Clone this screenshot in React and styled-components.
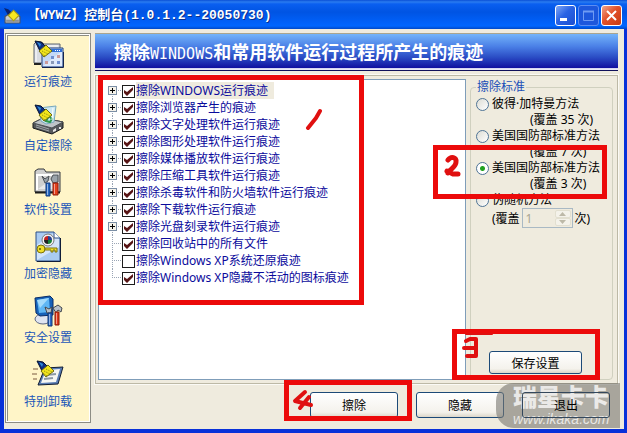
import React, { useState } from 'react';
import styled, { createGlobalStyle, css } from 'styled-components';

const treeItems = [
  { text: '擦除WINDOWS运行痕迹', children: true, checked: true, selected: true },
  { text: '擦除浏览器产生的痕迹', children: true, checked: true },
  { text: '擦除文字处理软件运行痕迹', children: true, checked: true },
  { text: '擦除图形处理软件运行痕迹', children: true, checked: true },
  { text: '擦除媒体播放软件运行痕迹', children: true, checked: true },
  { text: '擦除压缩工具软件运行痕迹', children: true, checked: true },
  { text: '擦除杀毒软件和防火墙软件运行痕迹', children: true, checked: true },
  { text: '擦除下载软件运行痕迹', children: true, checked: true },
  { text: '擦除光盘刻录软件运行痕迹', children: true, checked: true },
  { text: '擦除回收站中的所有文件', checked: true },
  { text: '擦除Windows XP系统还原痕迹', checked: false },
  { text: '擦除Windows XP隐藏不活动的图标痕迹', checked: true },
];

const methods = [
  { id: 'gutmann', text: '彼得·加特曼方法', passes: '(覆盖 35 次)' },
  { id: 'dod7', text: '美国国防部标准方法', passes: '(覆盖 7 次)' },
  { id: 'dod3', text: '美国国防部标准方法', passes: '(覆盖 3 次)' },
  { id: 'random', text: '伪随机方法' },
];

export default function App() {
  const [checks, setChecks] = useState(treeItems.map((item) => item.checked));
  const [method, setMethod] = useState('dod3');

  const toggle = (index) => {
    setChecks((prev) => prev.map((value, i) => (i === index ? !value : value)));
  };

  return (
    <Window>
      <GlobalStyle />
      <TitleBar>
        <TitleIcon viewBox="0 0 16 16">
          <path d="M1 9 L4 7 H12 L15 9 V15 H1 Z" fill="#c9cdd0" stroke="#4b5260" />
          <path d="M2 12 H14 V14 H2 Z" fill="#8b9096" />
          <path d="M0 1 L4 2 L7 5 L4 8 Z" fill="#0a2370" />
          <path d="M4 8 L9 3 L14 8 L9 13 Z" fill="#f6e821" stroke="#a89b18" />
        </TitleIcon>
        <Title>【WYWZ】控制台(1.0.1.2--20050730)</Title>
        <CaptionButton aria-label="最小化">
          <svg viewBox="0 0 19 19"><path d="M4 12 H11 V15 H4 Z" fill="#fff" /></svg>
        </CaptionButton>
        <CaptionButton aria-label="最大化" disabled>
          <svg viewBox="0 0 19 19">
            <path d="M4.5 5.5 H14.5 V14.5 H4.5 Z" fill="none" stroke="#6f9bf3" />
            <path d="M4 5.5 H15" stroke="#6f9bf3" strokeWidth="2" />
          </svg>
        </CaptionButton>
        <CaptionButton aria-label="关闭" $close>
          <svg viewBox="0 0 19 19"><path d="M5 5 L14 14 M14 5 L5 14" stroke="#fff" strokeWidth="2" /></svg>
        </CaptionButton>
      </TitleBar>

      <Body>
        <Sidebar>
          <NavItem href="#traces"><TracesIcon />运行痕迹</NavItem>
          <NavItem href="#custom"><CustomIcon />自定擦除</NavItem>
          <NavItem href="#settings"><SettingsIcon />软件设置</NavItem>
          <NavItem href="#encrypt"><EncryptIcon />加密隐藏</NavItem>
          <NavItem href="#security"><SecurityIcon />安全设置</NavItem>
          <NavItem href="#uninstall"><UninstallIcon />特别卸载</NavItem>
        </Sidebar>

        <Main>
          <Banner>
            擦除<BannerLatin>WINDOWS</BannerLatin>和常用软件运行过程所产生的痕迹
          </Banner>

          <Panel>
            <TreeBox>
              <Tree>
                {treeItems.map((item, index) => (
                  <TreeRow key={item.text}>
                    <Branch
                      first={index === 0}
                      last={index === treeItems.length - 1}
                      expandable={item.children}
                      text={item.text}
                    />
                    <CheckBox
                      id={`item-${index}`}
                      checked={checks[index]}
                      onChange={() => toggle(index)}
                    />
                    <TreeLabel htmlFor={`item-${index}`} $selected={item.selected}>
                      {item.text}
                    </TreeLabel>
                  </TreeRow>
                ))}
              </Tree>
              <TreeMark>
                <MarkDigit viewBox="0 0 20 24" $left={202} $top={26} $width={20}>
                  <path d="M15 5 L11 12 L3 22" />
                </MarkDigit>
              </TreeMark>
            </TreeBox>

            <Side>
              <Group>
                <legend>擦除标准</legend>
                {methods.map((item) => (
                  <Method key={item.id}>
                    <MethodLine>
                      <Radio
                        name="method"
                        id={item.id}
                        checked={method === item.id}
                        onChange={() => setMethod(item.id)}
                      />
                      <label htmlFor={item.id}>{item.text}</label>
                    </MethodLine>
                    {item.passes && <Passes>{item.passes}</Passes>}
                  </Method>
                ))}
                <CountLine>
                  <label htmlFor="count">(覆盖</label>
                  <Spinner>
                    <input id="count" type="text" defaultValue="1" disabled />
                    <SpinButtons>
                      <button aria-label="增加" disabled>
                        <svg viewBox="0 0 7 4"><path d="M0 4 L3.5 0 L7 4 Z" /></svg>
                      </button>
                      <button aria-label="减少" disabled>
                        <svg viewBox="0 0 7 4"><path d="M0 0 L3.5 4 L7 0 Z" /></svg>
                      </button>
                    </SpinButtons>
                  </Spinner>
                  <span>次)</span>
                </CountLine>
                <SaveButton>保存设置</SaveButton>
              </Group>
              <MethodMark>
                <MarkDigit viewBox="0 0 20 28" $left={4} $top={2} $width={20}>
                  <path d="M6 8 C9 4 15 5 14 10 C14 15 8 17 6 21 M5 19 L11 22 L16 22" strokeWidth="5" />
                </MarkDigit>
              </MethodMark>
              <SaveMark>
                <MarkDigit viewBox="0 0 44 32" $left={1} $top={-1} $width={44}>
                  <path d="M8 1 L34 1" strokeWidth="2" />
                  <path d="M8 8 L12 6 H18 M18 6 V23 H9 M6 15 H18" />
                </MarkDigit>
              </SaveMark>
            </Side>
          </Panel>

          <Footer>
            <FooterButton>擦除</FooterButton>
            <FooterButton>隐藏</FooterButton>
            <ExitButton>退出</ExitButton>
            <EraseMark>
              <MarkDigit viewBox="0 0 24 24" $left={2} $top={4} $width={24}>
                <path d="M14 3 L4 12 L20 16 M18 8 L9 19" />
              </MarkDigit>
            </EraseMark>
          </Footer>
        </Main>
      </Body>

      <Watermark>
        <strong>瑞星卡卡</strong>
        <em>www.ikaka.com</em>
      </Watermark>
    </Window>
  );
}

function Branch({ first, last, expandable, text }) {
  const lines = (
    <svg width="14" height="17" viewBox="0 0 14 17" shapeRendering="crispEdges">
      <path
        d={`M4.5 ${first ? 8 : 0} V${last ? 9 : 17} M4 8.5 H14`}
        stroke="#9aa5b5"
        strokeDasharray="1 1"
      />
      {expandable && (
        <>
          <rect x="0.5" y="4.5" width="8" height="8" fill="#f4f2ea" stroke="#7b8ea5" />
          <path d="M2 8.5 H7 M4.5 6 V11" stroke="#000" />
        </>
      )}
    </svg>
  );

  return expandable ? <Expander aria-label={`展开 ${text}`}>{lines}</Expander> : lines;
}

/* 扫帚，多个图标共用 */
function Broom() {
  return (
    <>
      <path d="M3 2 L9 3 L13 7 L8 12 L6 8 Z" fill="#0c2f86" stroke="#06132f" />
      <path d="M5 3 L9 5 L8 8 Z" fill="#2f8fd8" />
      <path d="M7 12 L14 6 L20 12 L12 18 Z" fill="#f2e51c" stroke="#6d6a10" />
      <path d="M10 12 L16 15 M12 10 L18 13 M9 14 L13 17" stroke="#8d8812" strokeDasharray="1 1" />
    </>
  );
}

function TracesIcon() {
  return (
    <NavIcon viewBox="0 0 32 32">
      <path d="M2 24 V5 L4 3 H10 L12 5 H28 V24 Z" fill="#d9dce2" stroke="#5d6470" />
      <path d="M4 23 V7 H26" fill="none" stroke="#fff" />
      <path d="M10 9 H31 V28 H10 Z" fill="#c3d8f6" stroke="#1f3f7e" />
      <path d="M11 27 L30 12 V27 Z" fill="#dfeafb" />
      <path d="M11 10 H30 V13 H11 Z" fill="#2f6fd6" />
      <path d="M23 11.5 H29" stroke="#fff" strokeDasharray="1 1" />
      <path d="M19 17 H22 V20 H19 Z M25 22 H28 V25 H25 Z" fill="#6f8fd0" />
      <path d="M25 16 H28 V19 H25 Z M13 22 H16 V25 H13 Z" fill="#c99" />
      <path d="M19 22 H22 V25 H19 Z" fill="#8a9ab8" />
      <path d="M2 25 H9" stroke="#222" strokeWidth="2" />
      <path d="M10 28.5 H31.5 V13" fill="none" stroke="#15254c" />
      <Broom />
    </NavIcon>
  );
}

function CustomIcon() {
  return (
    <NavIcon viewBox="0 0 32 32">
      <path d="M1 20 L11 15 L31 19 V25 L20 31 L1 25 Z" fill="#55585c" stroke="#17191c" />
      <path d="M1 20 L11 15 L31 19 L20 25 Z" fill="#bfc4c8" stroke="#4c5054" />
      <path d="M4 22 L17 26 M4 24 L17 28" stroke="#9fa4a8" />
      <path d="M21 27 L24 25 V28 L21 29 Z M27 24 H29 V26 H27 Z" fill="#e6e6e6" />
      <path d="M7 5 L24 3 L22 19 L14 21 L9 18 Z" fill="#cde8f2" stroke="#77a7bd" />
      <path d="M14 18 L17 13 L20 16 L18 19 Z" fill="none" stroke="#2c9a4b" strokeWidth="2" />
      <path d="M21 5 L20 17" stroke="#fff" />
      <Broom />
    </NavIcon>
  );
}

function SettingsIcon() {
  return (
    <NavIcon viewBox="0 0 32 32">
      <path d="M3 25 V4 L6 2 H12 L14 5 H28 V25 Z" fill="#cfcfcf" stroke="#35383c" />
      <path d="M5 23 V8 H26" fill="none" stroke="#fff" strokeWidth="2" />
      <path d="M6 22 L24 9 V22 Z" fill="#e9e9e9" />
      <path d="M3 25.5 H28" stroke="#1c1c1c" strokeWidth="2" />
      <path d="M10 9 L13 12 L17 9 L16 14 L13 16 Z" fill="#9aa3ab" stroke="#4b5056" />
      <path d="M21 8 L26 8 L26 15 L21 16 L19 12 Z" fill="#9aa3ab" stroke="#4b5056" />
      <path d="M14 16 H18 V29 H14 Z" fill="#2668c4" stroke="#123a7c" />
      <path d="M21 16 H26 V28 H21 Z" fill="#e5401c" stroke="#8d1c0a" />
      <path d="M15.5 17 V28 M22.5 17 V27" stroke="#fff" strokeOpacity="0.5" />
    </NavIcon>
  );
}

function EncryptIcon() {
  return (
    <NavIcon viewBox="0 0 32 32">
      <path d="M4 1 H22 L28 7 V30 H4 Z" fill="#a9cbf2" stroke="#2c4f86" />
      <path d="M5 14 L22 2 L27 8 V16 L5 29 Z" fill="#d3e4fa" />
      <path d="M22 1 V7 H28" fill="#fff" stroke="#2c4f86" />
      <path d="M28.5 7 V30.5 H5" fill="none" stroke="#111d38" />
      <circle cx="16" cy="9" r="6" fill="#f4f4f4" stroke="#777" />
      <path d="M16 9 V5 A4 4 0 0 1 20 9 Z" fill="#27408f" />
      <path d="M16 9 H20 A4 4 0 0 1 16 13 Z" fill="#17803a" />
      <path d="M16 9 V13 A4 4 0 0 1 12 9 Z" fill="#222" />
      <path d="M16 9 H12 A4 4 0 0 1 16 5 Z" fill="#c32222" />
      <circle cx="9" cy="18" r="4" fill="#f0df2c" stroke="#7d7208" />
      <circle cx="8" cy="18" r="1" fill="#58520a" />
      <path d="M13 17 H25 V21 H23 V19 H21 V21 H19 V19 H13 Z" fill="#f0df2c" stroke="#7d7208" />
    </NavIcon>
  );
}

function SecurityIcon() {
  return (
    <NavIcon viewBox="0 0 32 32">
      <ellipse cx="11" cy="24" rx="8" ry="5" fill="#dfe4f0" stroke="#5b6684" />
      <path d="M3 3 L18 1 L21 4 V20 L8 21 L4 18 Z" fill="#1762b8" stroke="#0b2c66" />
      <path d="M5 5 L17 3 L18 17 L7 18 Z" fill="#5fb6f4" />
      <path d="M5 5 L17 3 L8 13 Z" fill="#a4dafb" />
      <path d="M13 12 L17 14 L20 12 L19 18 L15 18 Z" fill="#b9c1c9" stroke="#42474d" />
      <path d="M21 13 L26 10 L30 13 L29 17 L26 15 L24 18 Z" fill="#b9c1c9" stroke="#42474d" />
      <path d="M16 18 H20 V31 H16 Z" fill="#2a6bc8" stroke="#10356f" />
      <path d="M23 17 H27 V30 H23 Z" fill="#e23a1b" stroke="#8b1a09" />
      <path d="M17.5 19 V30 M24.5 18 V29" stroke="#fff" strokeOpacity="0.5" />
    </NavIcon>
  );
}

function UninstallIcon() {
  return (
    <NavIcon viewBox="0 0 32 32">
      <path d="M13 9 L31 8 L26 25 L6 26 Z" fill="#5a7db4" stroke="#101c34" />
      <path d="M14 11 L28 10 L24 23 L9 24 Z" fill="#f6f7f4" />
      <path d="M15 16 L24 15 M12 20 L21 19" stroke="#8d9aa6" strokeWidth="2" />
      <path d="M1 10 H6 M0 15 H5 M1 20 H5" stroke="#7a5a40" />
      <g transform="translate(2 0)">
        <Broom />
      </g>
    </NavIcon>
  );
}

const GlobalStyle = createGlobalStyle`
  * {
    box-sizing: border-box;
  }

  body {
    margin: 0;
    font-family: 'Noto Sans', 'Noto Sans CJK SC', sans-serif;
    font-size: 12px;
  }

  button, input {
    font: inherit;
  }
`;

const Window = styled.div`
  position: relative;
  min-height: 100vh;
  display: flex;
  flex-direction: column;
  background-color: #0831d9;
`;

const TitleBar = styled.header`
  height: 29px;
  padding: 2px 5px 0 4px;
  display: flex;
  align-items: center;
  gap: 2px;
  background: linear-gradient(#0a4fd6 0, #2a7cf0 2px, #0a5ff0 4px, #0054e3 12px, #0060f8 22px, #0066ff 26px, #0048c8 29px);
`;

const TitleIcon = styled.svg`
  width: 17px;
  height: 17px;
`;

const Title = styled.h1`
  flex: 1;
  margin: 0 0 0 4px;
  color: white;
  font-family: 'Liberation Mono', 'Noto Sans CJK SC', monospace;
  font-size: 13px;
  font-weight: bold;
  line-height: 20px;
  white-space: nowrap;
  text-shadow: 1px 1px #0a2f8c;
`;

const CaptionButton = styled.button`
  width: 21px;
  height: 21px;
  padding: 0;
  border: 1px solid white;
  border-radius: 3px;
  background: ${(props) =>
    props.$close
      ? 'linear-gradient(135deg, #f0a58c, #e2512a 45%, #c83a12)'
      : 'linear-gradient(135deg, #7fa7f5, #2a63e4 45%, #1c4fd0)'};

  &:disabled {
    border-color: #5c8df2;
    background: #1d57dc;
  }

  svg {
    display: block;
    width: 19px;
    height: 19px;
  }
`;

const Body = styled.div`
  flex: 1;
  margin: 0 3px 4px 4px;
  padding: 4px 6px 6px 1px;
  display: flex;
  gap: 4px;
  background-color: #efebde;
`;

const Sidebar = styled.nav`
  flex: none;
  width: 86px;
  padding-top: 5px;
  display: flex;
  flex-direction: column;
  align-items: center;
  gap: 12px;
  border: 1px solid #8c8c84;
  box-shadow: inset 0 0 0 1px #fff, inset 2px 2px #8c8c84;
  background-color: #fff5c8;
`;

const NavItem = styled.a`
  display: flex;
  flex-direction: column;
  align-items: center;
  gap: 2px;
  color: #1a55b8;
  line-height: 18px;
  text-decoration: none;
`;

const NavIcon = styled.svg`
  width: 32px;
  height: 32px;
`;

const Main = styled.main`
  flex: 1;
  min-width: 0;
  display: flex;
  flex-direction: column;
`;

const Banner = styled.h2`
  height: 38px;
  margin: 0 0 4px;
  padding-left: 19px;
  color: white;
  font-size: 18px;
  font-weight: bold;
  line-height: 36px;
  white-space: nowrap;
  border-top: 1px solid #a9a58f;
  border-bottom: 1px solid #10105a;
  background: linear-gradient(#74b4fa, #4a7fe6 35%, #2a4cc4 65%, #1010a0 94%, #e8e8f8 96%);
`;

const BannerLatin = styled.span`
  font-family: 'DejaVu Sans Mono', monospace;
  font-size: 15px;
  font-weight: normal;
`;

const Panel = styled.div`
  flex: 1;
  padding: 3px 4px 3px 2px;
  display: flex;
  gap: 4px;
  border: 1px solid #bdb9a6;
  outline: 1px solid #fbfaf5;
`;

const TreeBox = styled.div`
  flex: 1;
  position: relative;
  padding: 2px 0 0 9px;
  border: 1px solid #7f9db9;
  background-color: white;
`;

const Tree = styled.ul`
  margin: 0;
  padding: 0;
  list-style: none;
`;

const TreeRow = styled.li`
  height: 17px;
  display: flex;
  align-items: center;

  svg {
    display: block;
  }
`;

const Expander = styled.button`
  padding: 0;
  border: none;
  background: none;
`;

const CheckBox = styled.input.attrs({ type: 'checkbox' })`
  appearance: none;
  width: 13px;
  height: 13px;
  margin: 2px 1px 0 0;
  border: 1px solid #1c1c1c;
  background-color: white;

  &:checked::after {
    content: '';
    display: block;
    width: 11px;
    height: 11px;
    background-color: #571414;
    clip-path: polygon(1px 4px, 4px 6px, 10px 1px, 10px 4px, 4px 10px, 1px 7px);
  }
`;

const TreeLabel = styled.label`
  padding: 0 6px 0 0;
  color: #0a0a9c;
  line-height: 17px;
  white-space: nowrap;
  background-color: ${(props) => (props.$selected ? '#efebde' : 'transparent')};
`;

const Side = styled.div`
  position: relative;
  flex: none;
  width: 143px;
  padding-top: 1px;
  display: flex;
`;

const Group = styled.fieldset`
  flex: 1;
  min-width: 0;
  margin: 0;
  padding: 2px 0 5px 5px;
  display: flex;
  flex-direction: column;
  border: 1px solid #d0d0bf;
  border-radius: 4px;

  legend {
    padding: 0 1px;
    color: #1a4fb8;
    line-height: 14px;
  }
`;

const Method = styled.div`
  line-height: 16px;
  white-space: nowrap;
`;

const MethodLine = styled.div`
  display: flex;
  align-items: center;
  gap: 3px;
`;

const Passes = styled.div`
  padding-left: 54px;
`;

const Radio = styled.input.attrs({ type: 'radio' })`
  appearance: none;
  width: 13px;
  height: 13px;
  margin: 0;
  border: 1px solid #4f7496;
  border-radius: 50%;
  background: linear-gradient(135deg, #dcdcd4, #fff);

  &:checked {
    background: radial-gradient(circle, #21a121 0, #21a121 2px, #fff 3px);
  }
`;

const CountLine = styled.div`
  padding-left: 16px;
  display: flex;
  align-items: center;
  gap: 2px;
  white-space: nowrap;
`;

const Spinner = styled.div`
  width: 51px;
  height: 20px;
  padding: 1px;
  display: flex;
  border: 1px solid #a9b9c4;
  background-color: #efebde;

  input {
    flex: 1;
    min-width: 0;
    padding: 0 2px;
    border: none;
    color: #a8a592;
    background: none;
  }
`;

const SpinButtons = styled.div`
  width: 16px;
  display: flex;
  flex-direction: column;

  button {
    flex: 1;
    padding: 0;
    display: flex;
    justify-content: center;
    align-items: center;
    border: 1px solid #e2dfd0;
    border-radius: 2px;
    background-color: #f4f2ea;
  }

  svg {
    width: 7px;
    height: 4px;
    fill: #bdb9a8;
  }
`;

const Button = styled.button`
  padding: 0;
  color: black;
  border: 1px solid #1c4a78;
  border-radius: 3px;
  background: linear-gradient(#fff, #f4f2ec 80%, #dcd7c9);
`;

const SaveButton = styled(Button)`
  width: 93px;
  height: 23px;
  margin: auto 0 0 13px;
`;

const Footer = styled.footer`
  position: relative;
  height: 39px;
  padding: 8px 8px 5px;
  display: flex;
  justify-content: flex-end;
  gap: 18px;
`;

const FooterButton = styled(Button)`
  width: 88px;
`;

/* 水印从按钮下面透出来 */
const ExitButton = styled(FooterButton)`
  position: relative;
  z-index: 2;
  border-color: #33475c;
  background: rgba(255, 255, 255, 0.1);
`;

/* 红色手绘标注 */
const mark = css`
  position: absolute;
  border: 5px solid #ec0a0a;
  pointer-events: none;
`;

const TreeMark = styled.div`
  ${mark}
  top: -5px;
  left: -1px;
  width: 266px;
  height: 230px;
`;

const MethodMark = styled.div`
  ${mark}
  top: 66px;
  left: -37px;
  width: 174px;
  height: 54px;
`;

const SaveMark = styled.div`
  ${mark}
  bottom: 0;
  left: -18px;
  width: 148px;
  height: 51px;
`;

const EraseMark = styled.div`
  ${mark}
  top: -4px;
  right: 206px;
  width: 128px;
  height: 41px;
`;

const MarkDigit = styled.svg`
  position: absolute;
  top: ${(props) => props.$top}px;
  left: ${(props) => props.$left}px;
  width: ${(props) => props.$width}px;
  fill: none;
  stroke: #e01010;
  stroke-width: 4px;
  stroke-linecap: round;
  stroke-linejoin: round;
`;

const Watermark = styled.div`
  position: absolute;
  z-index: 1;
  right: 7px;
  bottom: 5px;
  width: 124px;
  height: 45px;
  padding: 3px 0 0 17px;
  display: flex;
  flex-direction: column;
  gap: 4px;
  border-radius: 18px 0 0 18px;
  background-color: rgba(120, 118, 112, 0.6);
  color: rgba(255, 255, 255, 0.75);
  pointer-events: none;

  strong {
    font-size: 24px;
    font-weight: 900;
    line-height: 22px;
  }

  em {
    font-family: 'Liberation Sans', sans-serif;
    font-size: 14px;
    line-height: 14px;
  }
`;
